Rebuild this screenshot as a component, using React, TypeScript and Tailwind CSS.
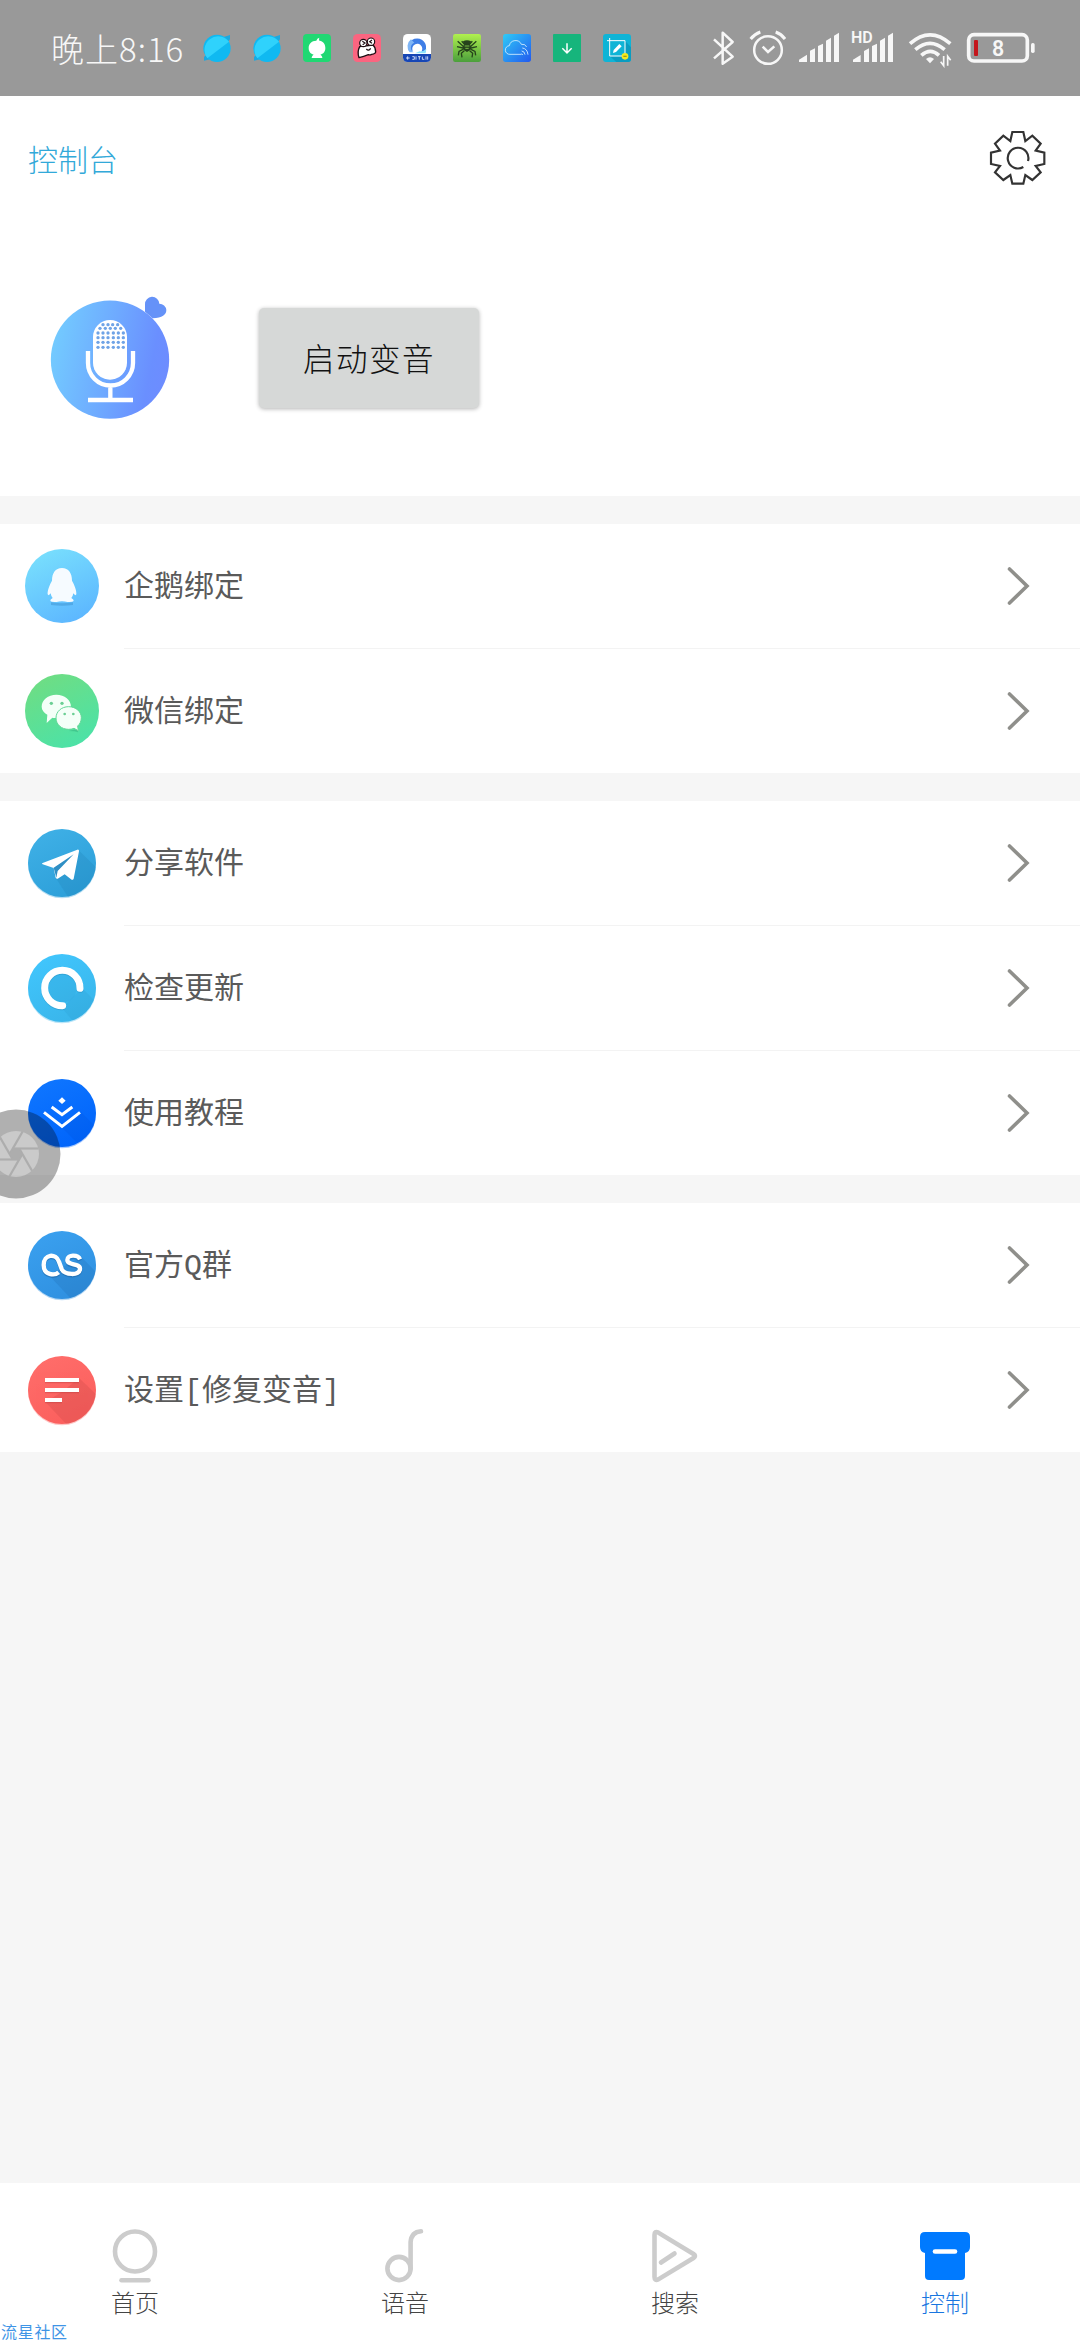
import React from 'react';

/* ---------- status bar: notification icons ---------- */

function PlanetIcon() {
    return (
        <svg viewBox="0 0 84 84" className="size-7">
            <path d="M3 80V68l10-6 8 14zM81 3V16L72 26 60 10z" fill="#1ba9e0" />
            <circle cx="42" cy="43" r="41" fill="#10b9f1" />
            <path d="M13 73A41 41 0 1 1 78 23z" fill="#2fd2fc" />
        </svg>
    );
}

function TreeIcon() {
    return (
        <svg viewBox="0 0 84 84" className="size-7">
            <rect width="84" height="84" rx="12" fill="#20d873" />
            <path
                d="M40 20q2-7 9-9-2 5 0 9c14 2 18 12 18 22 0 12-6 17-15 20 3 2 6 5 6 10H26c0-5 3-8 6-10-9-3-15-8-15-20 0-12 8-22 23-22z"
                fill="#fff"
            />
        </svg>
    );
}

function GhostIcon() {
    return (
        <svg viewBox="0 0 84 84" className="size-7">
            <rect width="84" height="84" rx="14" fill="#fb6580" />
            <path
                d="M20 38C15 48 14 60 18 71q14-3 28-9 4 2 10-1 12-2 12-8-1-14-8-20z"
                fill="#fff"
                stroke="#1c0d12"
                strokeWidth="4"
                strokeLinejoin="round"
            />
            <circle cx="31" cy="27" r="11" fill="#fff" stroke="#1c0d12" strokeWidth="3.5" />
            <circle cx="54" cy="23" r="11" fill="#fff" stroke="#1c0d12" strokeWidth="3.5" />
            <path d="M28 22l8 5-7 5M57 18l-7 5 7 5M40 45q7 8 13-2" fill="none" stroke="#1c0d12" strokeWidth="3.5" />
        </svg>
    );
}

function BrowserIcon() {
    return (
        <svg viewBox="0 0 84 84" className="size-7">
            <rect width="84" height="84" rx="14" fill="#fff" />
            <path d="M18 52A27 27 0 1 1 69 36v17H55a15 15 0 1 0-26-3z" fill="#3f7ee6" />
            <path d="M20 55A27 27 0 0 1 24 16l10 10a16 16 0 0 0-2 29z" fill="#7fb5f5" />
            <path d="M36 58h32l2-14q-10 10-20 8z" fill="#8ee3fb" />
            <path d="M0 60h84v10q0 14-14 14H14Q0 84 0 70z" fill="#1746b5" />
            <path d="M9 72h11M14 67v10M28 68h6v8h-6M39 67v10M45 68h8M49 68v9M58 68v8h6M69 67v10M74 67v10" fill="none" stroke="#e8efff" strokeWidth="2.5" />
        </svg>
    );
}

function SpiderIcon() {
    return (
        <svg viewBox="0 0 84 84" className="size-7">
            <defs>
                <linearGradient id="spider" x1="0" y1="0" x2="0" y2="1">
                    <stop offset="0" stopColor="#b0f14e" />
                    <stop offset="1" stopColor="#4b9f3c" />
                </linearGradient>
            </defs>
            <rect width="84" height="84" rx="7" fill="url(#spider)" />
            <path
                d="M32 38L14 22M30 42l-18-4M30 46l-12 6-2 12M34 50l-9 8 2 12M52 38l18-16M54 42l18-4M54 46l12 6 2 12M50 50l9 8-2 12M26 22l10 10M58 22L48 32"
                fill="none"
                stroke="#26431c"
                strokeWidth="4"
            />
            <path d="M30 22q12-6 24 0l-3 10q8 10 0 17l-9 5-9-5q-8-7 0-17z" fill="#26431c" />
            <path d="M35 36h14M37 43h10" stroke="#79bb44" strokeWidth="3" />
        </svg>
    );
}

function CloudIcon() {
    return (
        <svg viewBox="0 0 84 84" className="size-7">
            <defs>
                <linearGradient id="cloud" x1="0" y1="0" x2="1" y2="1">
                    <stop offset="0" stopColor="#2ecbf7" />
                    <stop offset="1" stopColor="#2259ee" />
                </linearGradient>
            </defs>
            <rect width="84" height="84" rx="8" fill="url(#cloud)" />
            <path
                d="M54 61H21a13 13 0 0 1-2-26 19 19 0 0 1 36-4q12-2 16 8M54 60a6 6 0 0 1 6 3M56 51q9 1 10 11M58 42q15 2 17 20"
                fill="none"
                stroke="#d8f1ff"
                strokeWidth="2.5"
            />
        </svg>
    );
}

function DownloadIcon() {
    return (
        <svg viewBox="0 0 84 84" className="size-7">
            <rect width="84" height="84" rx="3" fill="#16b57c" />
            <path d="M42 28v28M28 43l14 14 14-14" fill="none" stroke="#fff" strokeWidth="4.5" />
        </svg>
    );
}

function CropEditIcon() {
    return (
        <svg viewBox="0 0 84 84" className="size-7">
            <rect width="84" height="84" rx="9" fill="#0fb4d6" />
            <path d="M84 40v35q0 9-9 9H40L20 66h46V20z" fill="#0a9cc0" />
            <path d="M12 20h54v46H20V12" fill="none" stroke="#fff" strokeWidth="3" />
            <path d="M30 57l2-9 17-18 7 7-17 17z" fill="#fff" />
            <circle cx="66" cy="67" r="10" fill="#f4ea1c" />
            <path d="M61 67h10" stroke="#a39b17" strokeWidth="4" />
        </svg>
    );
}

/* ---------- status bar: system icons ---------- */

function BluetoothIcon() {
    return (
        <svg viewBox="66 84 72 120" className="w-6 h-10" fill="none" stroke="#f7f7f7" strokeWidth="7.5">
            <path d="M72 118l56 52-30 21V98l30 28-56 49" strokeLinejoin="round" />
        </svg>
    );
}

function AlarmIcon() {
    return (
        <svg viewBox="177 84 111 120" className="w-[37px] h-10 ml-[13px]" fill="none" stroke="#f7f7f7">
            <circle cx="234" cy="150" r="41.5" strokeWidth="7.5" />
            <path d="M218 140l16 16 19-17" strokeWidth="7.5" />
            <path d="M182 117q12-15 29-21M285 117q-11-15-28-21" strokeWidth="9" />
        </svg>
    );
}

function SignalIcon() {
    return (
        <svg viewBox="324 84 126 120" className="w-[42px] h-10 ml-3" fill="#f7f7f7">
            <path d="M327 186v-7l24-15v22zM360 186v-34l15-7v41zM384 186v-48l15-7v55zM408 186v-64l15-9v73zM432 186v-79l15-9v88z" />
        </svg>
    );
}

function HdSignalIcon() {
    return (
        <svg viewBox="483 84 129 120" className="w-[43px] h-10 ml-[11px] overflow-visible" fill="#f7f7f7">
            <path d="M489 186v-7l23-14v21zM522 186v-33l15-8v41zM546 186v-48l15-7v55zM570 186v-64l15-9v73zM594 186v-79l15-9v88z" />
            <text x="483" y="130" fontSize="48" fontWeight="600" className="font-['Roboto',sans-serif]">
                HD
            </text>
        </svg>
    );
}

function WifiIcon() {
    return (
        <svg viewBox="654 84 132 120" className="w-11 h-10 ml-[14px]" fill="none" stroke="#f7f7f7" strokeWidth="11">
            <path d="M660 131q60-53 121 0M676 149q44-38 88 0M694 166q27-24 53 0" />
            <path d="M708 177q12-11 24 0l-12 13z" fill="#f7f7f7" stroke="none" />
            <path d="M761 168v29l-9-12M773 197v-28l9 12" strokeWidth="5" />
        </svg>
    );
}

function BatteryIcon() {
    return (
        <svg viewBox="828 84 210 120" className="w-[70px] h-10 ml-[14px]">
            <rect x="836" y="104" width="176" height="79" rx="16" fill="none" stroke="#f7f7f7" strokeWidth="11" />
            <rect x="852" y="120" width="12" height="48" rx="3" fill="#c4161c" />
            <rect x="1023" y="129" width="11" height="30" rx="5" fill="#f7f7f7" />
            <text x="924" y="167" fontSize="64" fontWeight="600" textAnchor="middle" fill="#f7f7f7" className="font-['Roboto',sans-serif]">
                8
            </text>
        </svg>
    );
}

function GearIcon() {
    return (
        <svg viewBox="897 387 174 174" className="size-[58px]" fill="none" stroke="#333" strokeWidth="6.5">
            <path d="M967 396h33l6 27 21-16 25 24-15 21 26 6v34l-26 6 15 19-25 23-21-15-6 26h-33l-6-26-21 15-25-23 15-19-27-6v-34l27-6-15-21 25-24 21 16z" />
            <path d="M1014 483A31 31 0 1 0 1000 501" />
        </svg>
    );
}

/* ---------- voice changer logo ---------- */

function MicLogo() {
    const rows = [189, 203, 217, 232];
    const cols = [294, 309, 324, 340, 355, 370];
    return (
        <svg viewBox="150 75 360 375" className="w-[120px] h-[125px]">
            <defs>
                <linearGradient id="mic" gradientUnits="userSpaceOnUse" x1="152" y1="230" x2="507" y2="300">
                    <stop offset="0" stopColor="#73cbff" />
                    <stop offset="0.5" stopColor="#6ea9ff" />
                    <stop offset="0.85" stopColor="#6a8fff" />
                    <stop offset="1" stopColor="#6d8cff" />
                </linearGradient>
            </defs>
            <circle cx="330" cy="269" r="177.5" fill="url(#mic)" />
            <path d="M435 125V103a21 21 0 0 1 43-2 21 21 0 0 1 21 19c0 14-12 24-41 25z" fill="#6592f8" />
            <path d="M279 201a51 51 0 0 1 102 0v77a51 51 0 0 1-102 0z" fill="#fff" />
            <path d="M264 243v36a67 67 0 0 0 135 0v-36M331 346v42" fill="none" stroke="#fff" strokeWidth="13" />
            <path d="M264 390h135" stroke="#fff" strokeWidth="13" />
            <g fill="#6fa3e6">
                {[309, 324, 338, 353].map((x) => (
                    <circle key={x} cx={x} cy="164" r="5" />
                ))}
                {[300, 316, 331, 346, 362].map((x) => (
                    <circle key={x} cx={x} cy="175" r="5" />
                ))}
                {rows.map((y) => cols.map((x) => <circle key={`${x}-${y}`} cx={x} cy={y} r="5" />))}
            </g>
        </svg>
    );
}

/* ---------- list icons, all drawn around 0,0 ---------- */

type BadgeProps = {
    id: string;
    from: string;
    to: string;
    r?: number;
    children: React.ReactNode;
};

function Badge({ id, from, to, r = 102, children }: BadgeProps) {
    return (
        <svg viewBox="-114 -114 228 228" className="size-[76px]">
            <defs>
                <linearGradient id={id} x1="0.2" y1="0" x2="0.7" y2="1">
                    <stop offset="0" stopColor={from} />
                    <stop offset="1" stopColor={to} />
                </linearGradient>
                <clipPath id={`${id}-clip`}>
                    <circle r={r} />
                </clipPath>
            </defs>
            {r === 102 && <circle cy="4" r="102" fill={to} opacity="0.35" />}
            <circle r={r} fill={`url(#${id})`} />
            <g clipPath={`url(#${id}-clip)`}>{children}</g>
        </svg>
    );
}

function PenguinIcon() {
    const body = 'M0-54C20-54 30-38 30-16 38-2 44 14 43 25q-3 6-9-3-1 8-6 14 8 4 7 9-3 4-19 3-7-2-16-2-9 0-16 2-16 1-19-3-1-5 7-9-5-6-6-14-6 9-9 3C-44 14-38-2-30-16-30-38-20-54 0-54z';
    return (
        <Badge id="penguin" from="#79e0fd" to="#5cb6ff" r={111}>
            <path d="M-33 49q33 6 66 0v8q-33 5-66 0z" fill="#3d92d0" opacity="0.5" />
            <path d={body} fill="#f6fbff" />
        </Badge>
    );
}

function WechatIcon() {
    return (
        <Badge id="wechat" from="#70dd82" to="#4be2a8" r={111}>
            <path d="M20 60q20 0 28 4l-2-10z" fill="#2fae7c" opacity="0.5" />
            <path d="M-17-49c25 0 44 16 44 36S8 21-17 21c-5 0-8 0-12-1L-46 36l2-25c-10-6-17-14-17-24 0-20 19-36 44-36z" fill="#f4fff8" />
            <path d="M20-13c22 0 38 15 38 33 0 10-4 19-11 25l2 14-13-7c-5 2-10 3-16 3-22 0-38-15-38-34s16-34 38-34z" fill="#f4fff8" stroke="#63d697" strokeWidth="3" />
            <g fill="#6bcf94">
                <circle cx="-32" cy="-23" r="5" />
                <circle cx="0" cy="-23" r="5" />
                <circle cx="8" cy="9" r="4" />
                <circle cx="34" cy="9" r="4" />
            </g>
        </Badge>
    );
}

function TelegramIcon() {
    return (
        <Badge id="telegram" from="#3fb0e6" to="#2c9fd9">
            <path d="M50-38L120 30V120H30L-18 46z" fill="#1f7fb4" opacity="0.25" />
            <path d="M-58 0L46-40q6-1 5 5L35 47q-3 6-8 2L8 34l-21 13q-4 1-6-3l-6-29-33-11q-5-2 0-4z" fill="#fff" />
            <path d="M35-26L-25 14-17 44l4-20z" fill="#2f8fc4" />
        </Badge>
    );
}

function UpdateIcon() {
    return (
        <Badge id="update" from="#41c6fd" to="#39b5ea">
            <path d="M60 0L120 60V120H50L0 60z" fill="#2a95c8" opacity="0.2" />
            <circle r="44" fill="#2a95c8" opacity="0.2" />
            <path d="M54 4A53 53 0 1 0 2 56" fill="none" stroke="#2585b3" strokeWidth="21" strokeLinecap="round" opacity="0.35" />
            <path d="M54 1A53 53 0 1 0 2 53" fill="none" stroke="#fff" strokeWidth="21" strokeLinecap="round" />
        </Badge>
    );
}

function LayersIcon() {
    return (
        <Badge id="layers" from="#0f76ff" to="#0064fb">
            <path d="M56-4L120 60V120H76L0 44z" fill="#0050d8" opacity="0.2" />
            <path d="M0-47L11-37 0-27-11-37z" fill="#fff" />
            <path d="M-31-18L0 5 31-18M-54-2L0 40 54-2" fill="none" stroke="#fff" strokeWidth="9" />
        </Badge>
    );
}

function QGroupIcon() {
    const d = 'M-10 22C-22 32-55 32-55 0-55-34-18-36-9-10L-1 12C6 30 54 34 54 11 54-6 16 2 16-15 16-32 48-32 54-17';
    return (
        <Badge id="qgroup" from="#3aa0ef" to="#2f90e0">
            <path d="M58-24L120 40V120H45L-40 30z" fill="#1e6bb0" opacity="0.25" />
            <path d={d} fill="none" stroke="#1e629f" strokeWidth="13" opacity="0.5" transform="translate(0 4)" />
            <path d={d} fill="none" stroke="#fff" strokeWidth="13" />
        </Badge>
    );
}

function LinesIcon() {
    return (
        <Badge id="lines" from="#ff6d6a" to="#fb5f5d">
            <path d="M51-36L120 30V120H30L-50 36 0 6z" fill="#b94040" opacity="0.22" />
            <path d="M-51-27H51M-51 3H51M-51 33H0" stroke="#b94040" strokeWidth="13" opacity="0.4" />
            <path d="M-51-30H51M-51 0H51M-51 30H0" stroke="#fff" strokeWidth="12" />
        </Badge>
    );
}

/* ---------- list ---------- */

type Item = {
    label: string;
    icon: React.ReactNode;
};

const groups: Item[][] = [
    [
        { label: '企鹅绑定', icon: <PenguinIcon /> },
        { label: '微信绑定', icon: <WechatIcon /> },
    ],
    [
        { label: '分享软件', icon: <TelegramIcon /> },
        { label: '检查更新', icon: <UpdateIcon /> },
        { label: '使用教程', icon: <LayersIcon /> },
    ],
    [
        { label: '官方Q群', icon: <QGroupIcon /> },
        { label: '设置[修复变音]', icon: <LinesIcon /> },
    ],
];

function Group({ items }: { items: Item[] }) {
    return (
        <div className="bg-white">
            {items.map((item, i) => (
                <React.Fragment key={item.label}>
                    {i > 0 && <div className="h-px ml-[124px] bg-[#f3f3f3]" />}
                    <div className="flex items-center h-[124px] pr-[49px]">
                        <div className="w-[124px] flex justify-center">{item.icon}</div>
                        <span className="flex-1 pt-1 text-[30px] leading-none text-[#5a5a5a] font-['Liberation_Mono','Noto_Sans_CJK_SC',monospace]">
                            {item.label}
                        </span>
                        <svg viewBox="0 0 25 40" className="w-[25px] h-10" fill="none" stroke="#8f8f8b" strokeWidth="3.6" strokeLinecap="round">
                            <path d="M3.5 3L21 20 3.5 37" />
                        </svg>
                    </div>
                </React.Fragment>
            ))}
        </div>
    );
}

/* ---------- bottom navigation ---------- */

const tabs = [
    {
        label: '首页',
        active: false,
        icon: (
            <g fill="none" stroke="#ccc" strokeWidth="4.6" strokeLinecap="round">
                <circle cx="30" cy="24.5" r="20" />
                <path d="M16.5 53.2h27" />
            </g>
        ),
    },
    {
        label: '语音',
        active: false,
        icon: (
            <g fill="none" stroke="#ccc" strokeWidth="4.6" strokeLinecap="round">
                <circle cx="24" cy="41.5" r="11.6" />
                <path d="M35.6 41.5V15Q36.5 5 46 4.3" />
            </g>
        ),
    },
    {
        label: '搜索',
        active: false,
        icon: (
            <g fill="none" stroke="#ccc" strokeWidth="4.6" strokeLinecap="round" strokeLinejoin="round">
                <path d="M9.5 8q0-4.5 3.8-2.4L48.5 27q3 2 0 4L13.3 52.4Q9.500 54 9.5 50z" />
                <path d="M16 35.5L29.500 26.500" />
            </g>
        ),
    },
    {
        label: '控制',
        active: true,
        icon: (
            <>
                <path d="M10 5h40q5 0 5 5v10q0 5-5 6v23q0 4-4 4H14q-4 0-4-4V26q-5-1-5-6V10q0-5 5-5z" fill="#007aff" />
                <path d="M20 24.5h20" stroke="#fff" strokeWidth="4.6" strokeLinecap="round" />
            </>
        ),
    },
];

export default function App() {
    return (
        <div className="relative flex flex-col w-[1080px] h-[2340px] overflow-hidden bg-[#f6f6f6] font-['Noto_Sans_CJK_SC',sans-serif]">
            {/* Status bar */}
            <div className="flex items-center justify-between h-24 pl-[51px] pr-11 bg-[#999]">
                <div className="flex items-center">
                    <span className="w-[152px] text-[33px] tracking-[1px] leading-none font-light text-[#f7f7f7] whitespace-nowrap">
                        晚上8:16
                    </span>
                    <div className="flex gap-[22px]">
                        <PlanetIcon />
                        <PlanetIcon />
                        <TreeIcon />
                        <GhostIcon />
                        <BrowserIcon />
                        <SpiderIcon />
                        <CloudIcon />
                        <DownloadIcon />
                        <CropEditIcon />
                    </div>
                </div>
                <div className="flex items-center">
                    <BluetoothIcon />
                    <AlarmIcon />
                    <SignalIcon />
                    <HdSignalIcon />
                    <WifiIcon />
                    <BatteryIcon />
                </div>
            </div>

            {/* Header */}
            <header className="flex items-center justify-between h-[124px] pl-7 pr-[33px] bg-white">
                <h1 className="text-[30px] leading-none font-light text-[#32a9d9]">控制台</h1>
                <GearIcon />
            </header>

            <section className="flex items-start h-[276px] pl-[50px] pt-[75px] bg-white">
                <MicLogo />
                <button className="mt-[13px] ml-[89px] w-[220px] h-[100px] rounded-[5px] bg-[#d6d8d7] shadow-[0_1px_4px_rgba(0,0,0,0.3)] text-[31.5px] tracking-[1.5px] leading-none font-light text-[#111]">
                    启动变音
                </button>
            </section>

            {/* Menu */}
            <main className="flex flex-col flex-1 gap-7 pt-7">
                {groups.map((items) => (
                    <Group key={items[0].label} items={items} />
                ))}
            </main>

            {/* Tabs */}
            <nav className="grid grid-cols-4 h-[157px] pt-11 bg-white">
                {tabs.map((tab) => (
                    <div key={tab.label} className="flex flex-col items-center">
                        <svg viewBox="0 0 60 60" className="size-[60px]">
                            {tab.icon}
                        </svg>
                        <span className={tab.active ? 'mt-[3px] text-2xl leading-none font-light text-[#1976e0]' : 'mt-[3px] text-2xl leading-none font-light text-[#444]'}>
                            {tab.label}
                        </span>
                    </div>
                ))}
            </nav>

            {/* Floating screen recorder button */}
            <svg viewBox="-45 -45 90 90" className="absolute left-[-29px] top-[1109px] size-[90px]">
                <circle r="44.5" fill="#000" opacity="0.31" />
                <circle r="23" fill="#fff" opacity="0.33" />
                <g stroke="#adadad" strokeWidth="2.2">
                    {[0, 60, 120, 180, 240, 300].map((a) => (
                        <path key={a} d="M22.5-5.500H-3" transform={`rotate(${a})`} />
                    ))}
                    <path d="M-3-5.500H3L6.300 0 3 5.500H-3L-6.300 0z" fill="#adadad" stroke="none" />
                </g>
            </svg>

            {/* Community watermark */}
            <span className="absolute left-px top-[2323px] text-base leading-none tracking-[0.7px] text-[#3f95e6] whitespace-nowrap">
                流星社区
            </span>
        </div>
    );
}
